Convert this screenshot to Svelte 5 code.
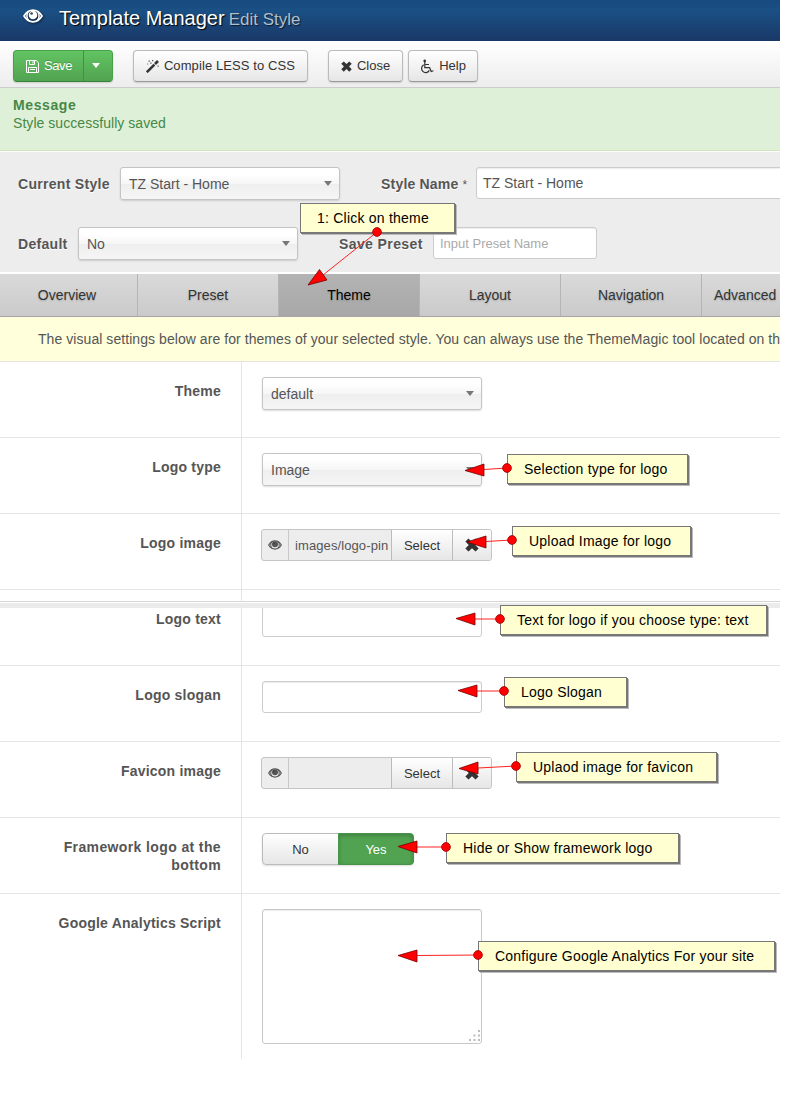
<script>
  const tabs = ['Overview', 'Preset', 'Theme', 'Layout', 'Navigation', 'Advanced'];

  const rows = [
    { label: 'Theme', kind: 'select', value: 'default' },
    { label: 'Logo type', kind: 'select', value: 'Image' },
    { label: 'Logo image', kind: 'media', value: 'images/logo-pin' },
    { label: 'Logo text', kind: 'text', value: '' },
    { label: 'Logo slogan', kind: 'text', value: '' },
    { label: 'Favicon image', kind: 'media', value: '' },
    { label: 'Framework logo at the bottom', kind: 'toggle', value: '' },
    { label: 'Google Analytics Script', kind: 'area', value: '' }
  ];

  const notes = [
    { x: 300, y: 203, w: 155, t: '1: Click on theme', dot: [377, 232], end: [323, 275], head: '308,285 319.5,269.5 327,280' },
    { x: 507, y: 454, w: 181, t: 'Selection type for logo', dot: [507, 468], end: [484, 469.5], head: '465,470.5 484,464 484,476' },
    { x: 512, y: 526, w: 179, t: 'Upload Image for logo', dot: [512, 540], end: [486, 541.5], head: '467,542 486,536 486,548' },
    { x: 500, y: 605, w: 267, t: 'Text for logo if you choose type: text', dot: [500, 619], end: [475, 619], head: '456,618.5 475,613 475,625' },
    { x: 504, y: 677, w: 123, t: 'Logo Slogan', dot: [504, 691], end: [477, 691], head: '458,690.5 477,685 477,697' },
    { x: 516, y: 752, w: 201, t: 'Uplaod image for favicon', dot: [516, 766], end: [478, 768], head: '459,768.5 478,762 478,774' },
    { x: 446, y: 833, w: 233, t: 'Hide or Show framework logo', dot: [446, 847], end: [417, 847], head: '398,846.5 417,841 417,853' },
    { x: 478, y: 941, w: 297, t: 'Configure Google Analytics For your site', dot: [478, 955], end: [417, 955.5], head: '398,955.5 417,950 417,962' }
  ];
</script>

{#snippet eye(w, h)}
  <svg width={w} height={h} viewBox="0 0 20 14">
    <path fill="none" stroke="currentColor" stroke-width="1.800" d="M1 7C3.500 3 6.500 1.200 10 1.200S16.500 3 19 7c-2.500 4-5.500 5.800-9 5.800S3.500 11 1 7Z" />
    <path fill="none" stroke="currentColor" stroke-width="1.500" d="M5.200 2.500c-1.600 2.500-1.600 6 .2 9M14.800 2.500c1.600 2.500 1.600 6-.2 9" />
    <circle cx="10" cy="6" r="4.300" fill="currentColor" />
    <circle cx="8.600" cy="4.500" r="1.300" fill="#345" />
  </svg>
{/snippet}

{#snippet cross(s)}
  <svg width={s} height={s} viewBox="0 0 12 12">
    <path fill="currentColor" d="M3 .5 6 3.400 9 .5 11.700 3 8.800 6l2.900 3L9 11.600 6 8.700 3 11.600.3 9l2.900-3L.3 3Z" />
  </svg>
{/snippet}

{#snippet dropdown(v)}
  <div class="select"><span>{v}</span><i class="caret"></i></div>
{/snippet}

<div class="page">
  <header>
    <span class="logo">{@render eye(20, 14)}</span>
    <h1>Template Manager</h1>
    <small>Edit Style</small>
  </header>

  <div class="toolbar">
    <div class="save">
      <div class="main">
        <svg width="13" height="13" viewBox="0 0 13 13" fill="none" stroke="#fff">
          <path d="M.5.5h9.700l2.300 2.300v9.700H.5Z" />
          <path d="M3.500.5v4h5v-4M2.500 12.500v-5h8v5M4 9.500h5" />
          <path d="M7 1.200v2.300" />
        </svg>
        <span>Save</span>
      </div>
      <div class="drop"><i class="caret"></i></div>
    </div>
    <div class="btn compile">
      <svg width="13" height="13" viewBox="0 0 13 13">
        <path stroke="#333" stroke-width="2.600" d="M.8 12.200 8.400 4.600" />
        <path stroke="#333" stroke-width="2.600" d="M9 4 12 1" />
        <path fill="#555" d="M2.500.5h1.300v1.300H2.500zM6 0h1.300v1.300H6zM4.200 2.400h1.300v1.300H4.200zM1.200 3.400h1v1h-1zM11.500 5.500h1.200v1.200h-1.200z" />
      </svg>
      <span>Compile LESS to CSS</span>
    </div>
    <div class="btn close">{@render cross(11)}<span>Close</span></div>
    <div class="btn help">
      <svg width="14" height="15" viewBox="0 0 14 15" fill="none" stroke="#333" stroke-width="1.200">
        <circle cx="4.700" cy="1.900" r="1.300" fill="#333" stroke="none" />
        <path d="M4.800 2.500v6.200h4.800l1.600 3.800 2.200-.8M5 5.500h4" />
        <path d="M3.700 5.900a4.100 4.100 0 1 0 5.600 5.500" />
      </svg>
      <span>Help</span>
    </div>
  </div>

  <div class="message">
    <b>Message</b>
    <p>Style successfully saved</p>
  </div>

  <div class="styles">
    <div class="line">
      <label class="l1">Current Style</label>{@render dropdown('TZ Start - Home')}
      <label class="l2">Style Name <em>*</em></label><div class="input wide">TZ Start - Home</div>
    </div>
    <div class="line">
      <label class="l3">Default</label>{@render dropdown('No')}
      <label class="l4">Save Preset</label><div class="input preset">Input Preset Name</div>
    </div>
  </div>

  <nav>
    {#each tabs as t}
      <div class="tab" class:active={t === 'Theme'}>{t}</div>
    {/each}
  </nav>

  <div class="notice">The visual settings below are for themes of your selected style. You can always use the ThemeMagic tool located on th</div>

  <div class="rows">
    {#each rows as r}
      <div class="row">
        <div class="name" class:loose={r.kind === 'toggle'}>{r.label}</div>
        <div class="field">
          {#if r.kind === 'select'}
            {@render dropdown(r.value)}
          {:else if r.kind === 'media'}
            <div class="media">
              <div class="peek">{@render eye(14, 10)}</div>
              <div class="file">{r.value}</div>
              <div class="pick">Select</div>
              <div class="clear">{@render cross(14)}</div>
            </div>
          {:else if r.kind === 'text'}
            <div class="input"></div>
          {:else if r.kind === 'toggle'}
            <div class="toggle"><span>No</span><span class="on">Yes</span></div>
          {:else}
            <div class="area">
              <svg width="12" height="12" viewBox="0 0 12 12" fill="#bbb">
                <path d="M9 0h2v2H9zM4.500 4.500h2v2h-2zM9 4.500h2v2H9zM0 9h2v2H0zM4.500 9h2v2h-2zM9 9h2v2H9z" />
              </svg>
            </div>
          {/if}
        </div>
      </div>
    {/each}
  </div>

  <div class="seam"></div>

  {#each notes as n}
    <div class="note" style="left:{n.x}px;top:{n.y}px;width:{n.w}px">{n.t}</div>
  {/each}
  <svg class="arrows" width="780" height="1103">
    {#each notes as n}
      <line x1={n.dot[0]} y1={n.dot[1]} x2={n.end[0]} y2={n.end[1]} stroke="#f22" />
      <polygon points={n.head} fill="#f00" stroke="#700" stroke-width=".8" />
      <circle cx={n.dot[0]} cy={n.dot[1]} r="4.400" fill="#f00" stroke="#900" stroke-width=".8" />
    {/each}
  </svg>
</div>

<style>
  :global(body) { background: #fff; overflow: hidden; }
  .page, .page * { box-sizing: border-box; }
  .page {
    position: relative; width: 780px; height: 1103px; overflow: hidden;
    font: 14px/18px "Liberation Sans", Arial, sans-serif; color: #555;
  }
  svg { display: block; flex: none; }
  header {
    height: 41px; padding-left: 23px; display: flex; align-items: center;
    background: linear-gradient(#184a7d, #1a5085 25%, #1a3867); color: #fff;
  }
  .logo { margin: -9px 16px 0 0; filter: drop-shadow(1px 1px 1px #0008); }
  h1 { margin: -5px 4px 0 0; font-size: 20px; font-weight: 400; line-height: 24px; text-shadow: 1px 1px 1px #000; white-space: nowrap; }
  small { margin-top: -2px; font-size: 17px; line-height: 20px; color: #b0bfcd; text-shadow: 1px 1px 1px #0009; }
  .toolbar {
    height: 47px; display: flex; padding: 9px 0 0 13px; border-bottom: 1px solid #ccc;
    background: linear-gradient(#fff, #ededed);
  }
  .save, .btn { height: 32px; border-radius: 4px; box-shadow: 0 1px 2px #0002; font-size: 13px; }
  .save {
    width: 100px; margin-right: 20px; display: flex; border: 1px solid #48a048; border-bottom-color: #378137;
    background: linear-gradient(#62c462, #51a351); color: #fff; text-shadow: 0 -1px 0 #0003;
  }
  .main { width: 70px; display: flex; align-items: center; gap: 5px; padding-left: 12px; border-right: 1px solid #429042; }
  .main span { letter-spacing: -.4px; }
  .drop { flex: 1; display: flex; justify-content: center; padding: 12px 4px 0 0; }
  .drop .caret { border-top-color: #fff; }
  .caret { width: 0; height: 0; border: 4.5px solid transparent; border-top: 5px solid #777; border-bottom: 0; }
  .btn {
    display: flex; align-items: center; justify-content: center; gap: 5px; border: 1px solid #bbb; border-bottom-color: #999;
    background: linear-gradient(#fff, #e6e6e6); color: #333; white-space: nowrap;
  }
  .compile { width: 175px; margin-right: 20px; letter-spacing: .1px; }
  .close { width: 75px; margin-right: 5px; }
  .help { width: 70px; }
  .message {
    height: 63px; padding: 8px 13px; background: #dff0d8; border-bottom: 1px solid #d0e6bd; color: #468847;
  }
  .message b { letter-spacing: .6px; }
  .message p { margin: 0; letter-spacing: .05px; }
  .styles { height: 123px; padding-top: 15px; border-top: 1px solid #fff; border-bottom: 2px solid #fff; background: #ededed; }
  .line { display: flex; height: 60px; padding-left: 18px; }
  label { flex: none; padding-top: 8px; font-weight: 700; letter-spacing: .3px; text-shadow: 0 1px 0 #fff; white-space: nowrap; }
  label em { font-style: normal; font-weight: 400; font-size: 12px; }
  .l1 { width: 102px; }
  .l2 { width: 136px; padding-left: 41px; letter-spacing: .2px; }
  .l3 { width: 60px; }
  .l4 { width: 135px; padding-left: 41px; letter-spacing: .4px; }
  .select {
    flex: none; width: 220px; height: 33px; padding: 0 7px 0 8px; display: flex; align-items: center; justify-content: space-between;
    border: 1px solid #c4c4c4; border-radius: 3px; box-shadow: 0 1px 2px #0002;
    background: linear-gradient(#fff 20%, #f6f6f6 50%, #eee 52%, #f6f6f6);
  }
  .input {
    flex: none; width: 220px; height: 32px; padding: 6px 6px; border: 1px solid #ccc; border-radius: 3px; background: #fff;
    box-shadow: inset 0 1px 1px #00000013;
  }
  .wide { width: 320px; }
  .preset { width: 164px; padding-top: 7px; color: #aaa; font-size: 13px; }
  nav { display: flex; height: 43px; border-bottom: 1px solid #a5a5a5; background: linear-gradient(#dadada, #cacaca); overflow: hidden; }
  .tab {
    flex: none; width: 141px; padding-top: 12px; text-align: center; border-right: 1px solid #b5b5b5; color: #333;
    text-shadow: 0 1px 2px #0003;
  }
  .tab:first-child { width: 138px; padding-right: 3px; }
  .tab:last-child { padding-left: 12px; text-align: left; }
  .active { background: linear-gradient(#b3b3b3, #a8a8a8); color: #000; }
  .notice {
    height: 45px; padding: 13px 0 0 38px; background: #ffffdc; border-bottom: 1px solid #e4e4e4; white-space: nowrap; overflow: hidden;
    letter-spacing: .06px;
  }
  .row { display: flex; height: 76px; border-bottom: 1px solid #e5e5e5; }
  .row:last-child { height: 165px; border: 0; }
  .name { width: 242px; padding: 20px 20px 0 50px; border-right: 1px solid #e5e5e5; text-align: right; font-weight: 700; letter-spacing: .22px; }
  .loose { letter-spacing: .38px; }
  .field { padding: 15px 0 0 20px; }
  .media { display: flex; width: 231px; height: 32px; margin-left: -1px; border: 1px solid #c4c4c4; border-radius: 3px; background: #ededed; overflow: hidden; }
  .peek { width: 27px; padding: 10px 0 0 6px; border-right: 1px solid #c8c8c8; }
  .file { width: 102px; padding: 7px 0 0 6px; font-size: 13px; letter-spacing: .1px; white-space: nowrap; }
  .pick, .clear { background: linear-gradient(#fff, #e6e6e6); border-left: 1px solid #bbb; color: #333; }
  .pick { width: 61px; padding-top: 7px; text-align: center; font-size: 13px; }
  .clear { flex: 1; padding: 8px 0 0 12px; }
  .toggle {
    display: flex; width: 152px; height: 32px; border: 1px solid #bbb; border-radius: 4px; text-align: center; color: #333;
    background: linear-gradient(#fff, #e6e6e6); box-shadow: 0 1px 2px #0002; font-size: 13px;
  }
  .toggle span { width: 75px; padding-top: 7px; }
  .toggle .on { width: 76px; margin: -1px -1px -1px 0; background: #51a351; color: #fff; box-shadow: inset 0 2px 4px #0003; border: 1px solid #48924a; border-radius: 0 4px 4px 0; }
  .area {
    display: flex; align-items: flex-end; justify-content: flex-end; width: 220px; height: 135px; padding: 0 0 1px;
    border: 1px solid #c8c8c8; border-radius: 3px; box-shadow: inset 0 1px 1px #00000013;
  }
  .seam { position: absolute; left: 0; top: 601px; width: 780px; height: 7px; background: #ebebeb; border-top: 1px solid #d5d5d5; box-shadow: inset 0 1px 0 #fff; }
  .note {
    position: absolute; height: 30px; padding: 5px 0 0 16px; border: 1px solid #777; background: #ffffd2; color: #000;
    box-shadow: 1px 1px 0 #777, 2px 2px 0 #bbb; white-space: nowrap; letter-spacing: .22px;
  }
  .arrows { position: absolute; left: 0; top: 0; }
</style>
